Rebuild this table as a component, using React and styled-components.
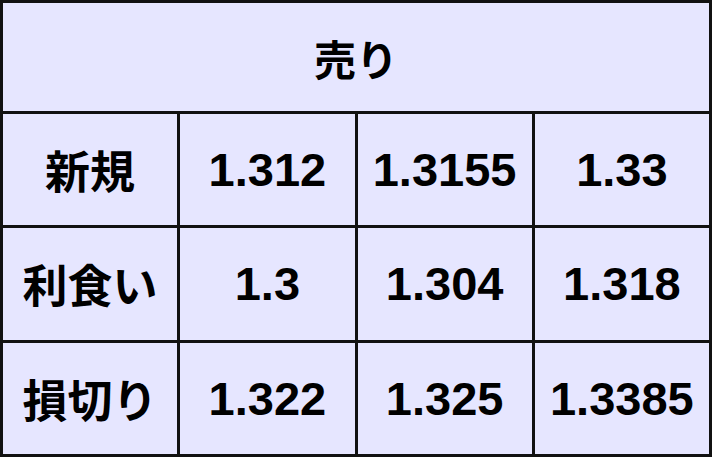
import React from 'react';
import styled, { createGlobalStyle } from 'styled-components';

const GlobalStyle = createGlobalStyle`
    html, body {
        margin: 0;
        padding: 0;
        background: #ffffff;
    }
`;

const rows = [
    { label: '新規', values: ['1.312', '1.3155', '1.33'] },
    { label: '利食い', values: ['1.3', '1.304', '1.318'] },
    { label: '損切り', values: ['1.322', '1.325', '1.3385'] },
];

const Table = styled.table`
    width: 712px;
    height: 457px;
    border-collapse: collapse;
    table-layout: fixed;
    background: #e6e6ff;
    font-family: "Liberation Sans", Arial, "Noto Sans CJK JP", sans-serif;
    font-weight: bold;
    color: #000;
`;

const Cell = styled.td`
    border: 3px solid #111;
    text-align: center;
    vertical-align: middle;
    padding: 0;
    font-size: ${props => (props.$label ? '45px' : '47px')};
    height: 108px;
`;

const HeaderCell = styled.th`
    border: 3px solid #111;
    text-align: center;
    vertical-align: middle;
    padding: 0;
    font-size: 42px;
    font-weight: bold;
    height: 108px;
`;

const App = () => (
    <>
        <GlobalStyle />
        <Table>
            <thead>
                <tr>
                    <HeaderCell colSpan={4}>売り</HeaderCell>
                </tr>
            </thead>
            <tbody>
                {rows.map(row => (
                    <tr key={row.label}>
                        <Cell $label>{row.label}</Cell>
                        {row.values.map((v, i) => (
                            <Cell key={i}>{v}</Cell>
                        ))}
                    </tr>
                ))}
            </tbody>
        </Table>
    </>
);

export default App;
